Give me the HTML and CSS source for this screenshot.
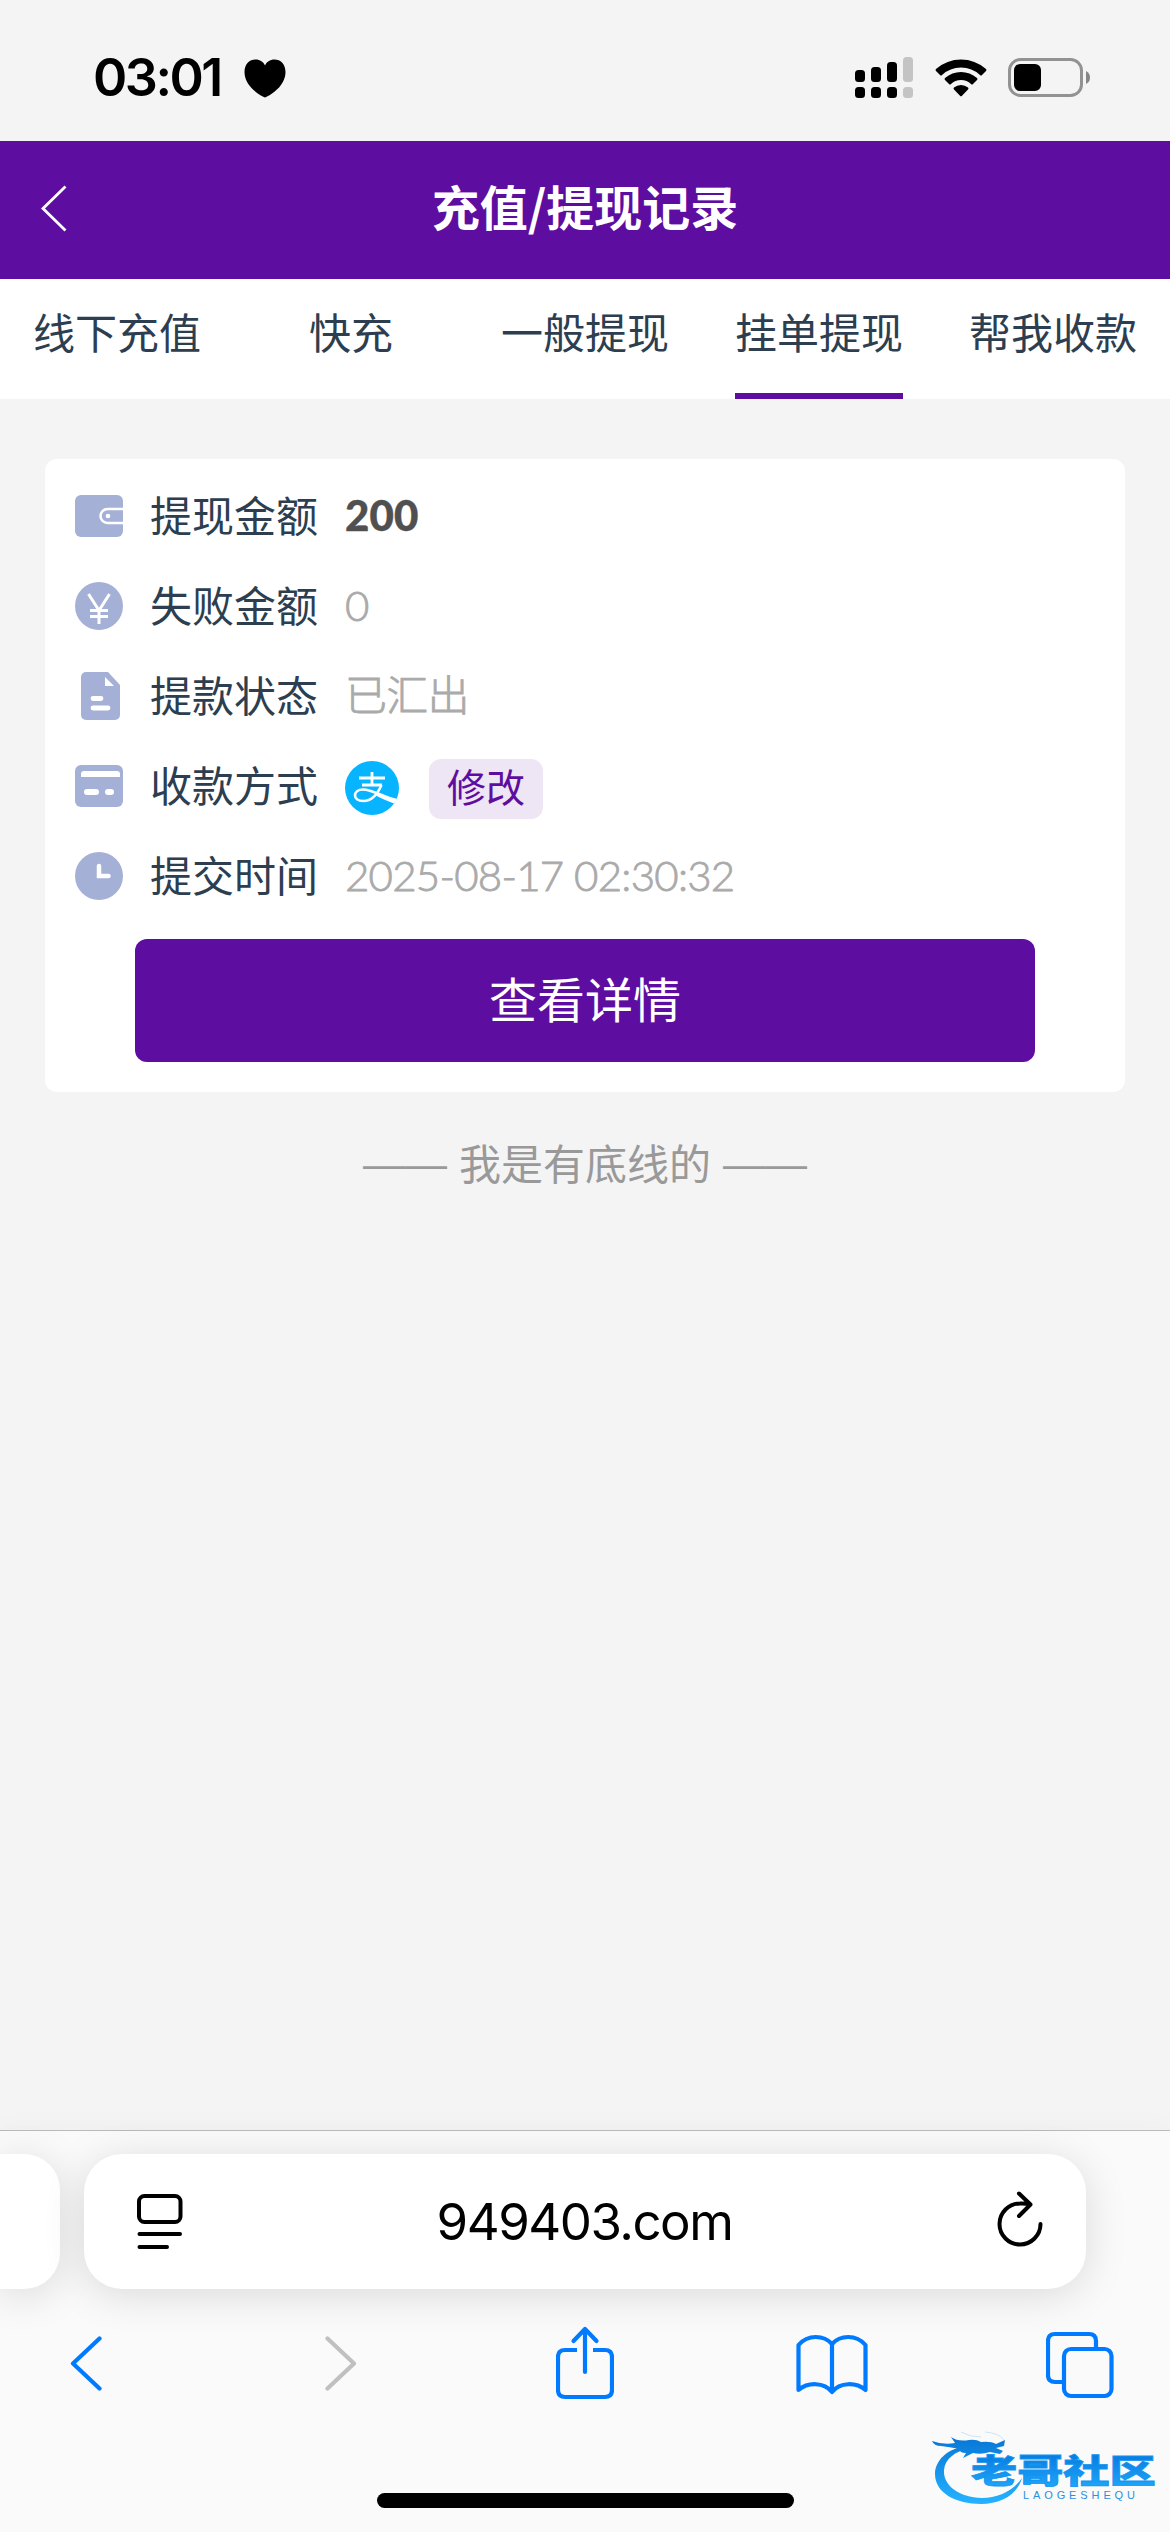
FILE: index.html
```html
<!DOCTYPE html>
<html lang="zh-CN">
<head>
<meta charset="utf-8">
<title>充值/提现记录</title>
<link rel="stylesheet" href="styles.css">
</head>
<body>
<div class="screen">
  <div class="status">
    <span class="time">03:01</span>
    <svg class="heart" width="42" height="39" viewBox="0 0 42 39"><path d="M21 38.5C15 36 .5 27 .5 13C.5 5 5.500 .5 11.500 .5C16 .5 19.500 3 21 6.500C22.500 3 26 .5 30.500 .5C36.500 .5 41.500 5 41.500 13C41.500 27 27 36 21 38.500Z"/></svg>
    <svg class="signal" width="58" height="42" viewBox="0 0 58 42"><rect y="13" width="10" height="12" rx="3.500"/><rect x="16" y="10" width="10" height="15" rx="3.500"/><rect x="32" y="5" width="10" height="20" rx="3.500"/><rect y="30" width="10" height="11" rx="3.500"/><rect x="16" y="30" width="10" height="11" rx="3.500"/><rect x="32" y="30" width="10" height="11" rx="3.500"/><g fill="#c4c4c4"><rect x="48" width="10" height="25" rx="3.500"/><rect x="48" y="30" width="10" height="11" rx="3.500"/></g></svg>
    <svg class="wifi" width="52" height="38" viewBox="0 0 52 38"><path d="M1 12Q0 11 1 10Q12 .5 26 .5T51 10Q52 11 51 12L47 16Q46 17 45 16Q37 8.500 26 8.500T7 16Q6 17 5 16Z"/><path d="M10 21Q9 20 10 19Q17 13 26 13T42 19Q43 20 42 21L38 25Q37 26 36 25Q32 21 26 21T16 25Q15 26 14 25Z"/><path d="M19 30.500Q18 29.500 19 28.500Q22 26 26 26T33 28.500Q34 29.500 33 30.500L27 36.800Q26 37.800 25 36.800Z"/></svg>
    <svg class="battery" width="83" height="39" viewBox="0 0 83 39"><rect x="1.500" y="1.500" width="72" height="36" rx="11" fill="none" stroke="#929292" stroke-width="3"/><rect x="6" y="6" width="27" height="27" rx="6"/><path d="M78 13Q82 15 82 19.500T78 26Z" fill="#868686"/></svg>
  </div>

  <header class="header">
    <svg class="header-back" width="26" height="47" viewBox="0 0 26 47"><path d="M24.500 1.500L2 23.500L24.500 45.500" fill="none" stroke="#fff" stroke-width="2.800"/></svg>
    <h1 class="title">充值/提现记录</h1>
  </header>

  <nav class="tabs">
    <span class="tab">线下充值</span>
    <span class="tab">快充</span>
    <span class="tab">一般提现</span>
    <span class="tab tab-active">挂单提现</span>
    <span class="tab">帮我收款</span>
  </nav>

  <main class="content">
    <section class="card">
      <div class="row">
        <svg class="icon" viewBox="0 0 48 48"><rect y="3" width="48" height="42" rx="6"/><path d="M48 17H32.500a7 7 0 0 0 0 14H48" fill="none" stroke="#fff" stroke-width="2.500"/><circle cx="33" cy="24" r="2.300" fill="#fff"/></svg>
        <span class="label">提现金额</span><span class="value amount">200</span>
      </div>
      <div class="row">
        <svg class="icon" viewBox="0 0 48 48"><circle cx="24" cy="24" r="24"/><path d="M13.500 12L24 28.500L34.500 12M24 28V42M15 28.500H33M15 34.500H33" fill="none" stroke="#fff" stroke-width="3"/></svg>
        <span class="label">失败金额</span><span class="value">0</span>
      </div>
      <div class="row">
        <svg class="icon" viewBox="0 0 48 48"><path d="M11 0H33L45 13V43a5 5 0 0 1-5 5H11a5 5 0 0 1-5-5V5a5 5 0 0 1 5-5Z"/><path d="M30 5L39 14H30Z" fill="#fff"/><path d="M18 26.500H26M18 36H33" stroke="#fff" stroke-width="4.800" stroke-linecap="round"/></svg>
        <span class="label">提款状态</span><span class="value">已汇出</span>
      </div>
      <div class="row">
        <svg class="icon" viewBox="0 0 48 48"><rect y="3" width="48" height="42" rx="6"/><path d="M6 15V12a3 3 0 0 1 3-3H42a3 3 0 0 1 3 3V15Z" fill="#fff"/><path d="M12 30H21M33 30H36" stroke="#fff" stroke-width="6" stroke-linecap="round"/></svg>
        <span class="label">收款方式</span>
        <svg class="alipay" width="54" height="54" viewBox="0 0 54 54"><circle cx="27" cy="27" r="27" fill="#06b4ff"/><path d="M14 17H40M27 11V24M17 24H37" fill="none" stroke="#fff" stroke-width="2.800"/><path d="M36.500 24C33 32 27 40 18.500 40C12.500 40 10 37 10 34.500C10 31 13 28.500 18 28.500C27 28.500 36 35 52 39.500" fill="none" stroke="#fff" stroke-width="2.600"/><path d="M32 32Q43 36.500 52.500 38L49 42.500Q37 38 30 34Z" fill="#fff"/></svg>
        <span class="edit">修改</span>
      </div>
      <div class="row">
        <svg class="icon" viewBox="0 0 48 48"><circle cx="24" cy="24" r="24"/><path d="M24 14V24H33.500" fill="none" stroke="#fff" stroke-width="4.500" stroke-linecap="round"/></svg>
        <span class="label">提交时间</span><span class="value">2025-08-17 02:30:32</span>
      </div>
      <div class="detail">查看详情</div>
    </section>
    <p class="end"><span class="dash">——</span><span>我是有底线的</span><span class="dash">——</span></p>
  </main>

  <footer class="browser">
    <div class="address-row">
      <div class="prev-tab"></div>
      <div class="address">
        <svg width="46" height="56" viewBox="0 0 46 56" fill="none" stroke="#000" stroke-width="4" stroke-linecap="round"><rect x="2" y="2" width="41.500" height="26" rx="5.500"/><path d="M2.500 40H43M2.500 53H30"/></svg>
        <span class="url">949403.com</span>
        <svg class="reload" width="48" height="58" viewBox="0 0 48 58" fill="none" stroke="#000" stroke-width="4" stroke-linecap="round" stroke-linejoin="round"><path d="M44.500 34A20.500 20.500 0 1 1 24 13.500Q29 13.200 34 14.500M23 3.500L34.500 14.500L23 26"/></svg>
      </div>
    </div>
    <div class="toolbar">
      <svg class="tool-back" width="32" height="76" viewBox="0 0 32 76"><path d="M29.500 13.500L3 38.500L29.500 63.500"/></svg>
      <svg class="tool-forward" width="32" height="76" viewBox="0 0 32 76"><path d="M2.500 13.500L29 38.500L2.500 63.500"/></svg>
      <svg class="tool-share" width="58" height="76" viewBox="0 0 58 76"><path d="M21 25H9Q2 25 2 32V65Q2 72 9 72H49Q56 72 56 65V32Q56 25 49 25H37" stroke-linecap="butt"/><path d="M29 47V4M17.500 16L29 4L40.500 16"/></svg>
      <svg class="tool-book" width="72" height="76" viewBox="0 0 72 76"><path d="M36 20V67M36 19C28 10 12 9 2.500 20V65C12 57 28 57 36 67C44 57 60 57 69.500 65V20C60 9 44 10 36 19Z"/></svg>
      <svg class="tool-tabs" width="68" height="76" viewBox="0 0 68 76"><rect x="18" y="24" width="47.500" height="47" rx="7"/><path d="M16 57H9Q2 57 2 50V16Q2 9 9 9H43Q50 9 50 16V23" stroke-linecap="butt"/></svg>
    </div>
    <div class="home"></div>
    <svg class="watermark" width="232" height="80" viewBox="0 0 232 80">
      <defs><linearGradient id="blue" gradientUnits="userSpaceOnUse" x1="0" y1="8" x2="0" y2="72"><stop offset="0" stop-color="#0878d8"/><stop offset="1" stop-color="#25b2ff"/></linearGradient>
      <linearGradient id="letters" x1="0" y1="0" x2="0" y2="1"><stop offset=".2" stop-color="#087bdf"/><stop offset="1" stop-color="#22adff"/></linearGradient></defs>
      <path fill="url(#blue)" d="M36 15C16 17 4 30 4 43C4 62 25 73 50 73C70 73 86 64 91 47C82 60 67 67 51 67C27 66 12 54 13 39C14 28 24 20 38 18Z"/>
      <path fill="url(#blue)" d="M1 10Q12 14 24 12L20 6Q27 11 38 9Q45 8 50 11Q60 10 65 13L74 9L73 15L65 17L72 20L69 23L59 21Q50 24 42 22L32 27L35 22Q28 22 29 18Q18 16 10 15Q3 15 1 10Z"/>
      <path d="M30 1Q39 6 50 6M54 1Q68 2 73 9" fill="none" stroke="#cfe3f4" stroke-width="1"/>
      <text class="wm-name" transform="translate(40 52) scale(1.400 1)" fill="url(#letters)">老哥社区</text>
      <text class="wm-latin" x="92" y="68" textLength="112">LAOGESHEQU</text>
    </svg>
  </footer>
</div>
</body>
</html>
```

FILE: styles.css
```css
* { box-sizing: border-box; }
body {
  margin: 0;
  background: #f4f4f4;
  font-family: Lato, "Noto Sans CJK SC", sans-serif;
}
svg { display: block; flex: none; }
.screen {
  width: 1170px;
  height: 2532px;
  display: flex;
  flex-direction: column;
  overflow: hidden;
}

.status {
  height: 141px;
  flex: none;
  display: flex;
  align-items: flex-start;
  padding: 0 79px 0 93px;
}
.time {
  width: 151px;
  padding-top: 47px;
  font: 600 52px/62px Inter, sans-serif;
  letter-spacing: -2.5px;
  white-space: nowrap;
}
.heart { margin-top: 59px; }
.signal { margin: 57px 0 0 auto; }
.wifi { margin: 59px 0 0 22px; }
.battery { margin: 58px 0 0 21px; }

.header {
  height: 138px;
  flex: none;
  display: grid;
  grid-template-columns: 130px 1fr 130px;
  align-items: center;
  background: #5d0da0;
}
.header-back { margin: 0 0 4px 41px; }
.title {
  margin: 0;
  padding-bottom: 10px;
  font: 700 48px/70px "Noto Sans CJK SC", sans-serif;
  text-align: center;
  color: #fff;
}

.tabs {
  height: 120px;
  flex: none;
  display: grid;
  grid-template-columns: repeat(5, 1fr);
  justify-items: center;
  background: #fff;
}
.tab {
  height: 120px;
  font: 400 42px/104px "Noto Sans CJK SC", sans-serif;
  color: #2c3e50;
}
.tab-active { border-bottom: 6px solid #5d0da0; }

.content { flex: 1; padding: 60px 45px 0; }
.card {
  height: 633px;
  padding: 12px 30px 30px;
  border-radius: 12px;
  background: #fff;
}
.row { height: 90px; display: flex; align-items: center; }
.icon { width: 48px; height: 48px; fill: #a5b0d6; }
.label {
  width: 195px;
  margin-left: 27px;
  padding-bottom: 4px;
  font: 400 42px/60px "Noto Sans CJK SC", sans-serif;
  color: #2c3e50;
}
.value {
  padding-bottom: 2px;
  font-size: 42px;
  line-height: 60px;
  font-weight: 300;
  letter-spacing: -.75px;
  color: #aaa;
  -webkit-text-stroke: .8px #aaa;
}
.amount {
  font-weight: 900;
  letter-spacing: .2px;
  color: #505050;
  -webkit-text-stroke: .4px #505050;
}
.alipay { margin-top: 4px; }
.edit {
  width: 114px;
  height: 60px;
  margin: 6px 0 0 30px;
  border-radius: 12px;
  background: #eee5f5;
  color: #5d0da0;
  font: 400 39px/52px "Noto Sans CJK SC", sans-serif;
  text-align: center;
}
.detail {
  height: 123px;
  margin: 18px 60px 0;
  border-radius: 12px;
  background: #5d0da0;
  color: #fff;
  font: 400 48px/116px "Noto Sans CJK SC", sans-serif;
  text-align: center;
}
.end {
  display: flex;
  justify-content: center;
  gap: 12px;
  margin: 40px 0 0;
  font: 400 42px/60px "Noto Sans CJK SC", sans-serif;
  color: #999;
}
.dash { padding-top: 2px; font-family: "Liberation Sans", sans-serif; }

.browser {
  position: relative;
  height: 402px;
  flex: none;
  border-top: 1px solid #b9bbba;
  background: #fafafa;
  box-shadow: 0 0 30px rgba(0, 0, 0, .03);
}
.address-row { display: flex; gap: 24px; padding-top: 23px; }
.prev-tab, .address {
  height: 135px;
  background: #fff;
  box-shadow: 0 6px 42px rgba(0, 0, 0, .13);
}
.prev-tab { width: 60px; border-radius: 0 36px 36px 0; }
.address {
  width: 1002px;
  display: flex;
  align-items: center;
  justify-content: space-between;
  padding: 0 42px 0 53px;
  border-radius: 38px;
}
.url {
  margin-right: 10px;
  font: 400 51px/62px Inter, sans-serif;
  letter-spacing: -1.5px;
}
.reload { margin-bottom: 5px; }
.toolbar {
  display: flex;
  margin-top: 36px;
  fill: none;
  stroke: #007aff;
  stroke-width: 4.2;
  stroke-linecap: round;
  stroke-linejoin: round;
}
.tool-back { margin-left: 70px; }
.tool-forward { margin-left: 223px; stroke: #c0c0c0; }
.tool-share { margin-left: 199px; }
.tool-book { margin-left: 182px; }
.tool-tabs { margin-left: 178px; }
.home {
  width: 417px;
  height: 15px;
  margin: 92px auto 0;
  border-radius: 8px;
  background: #000;
}
.watermark { position: absolute; left: 931px; top: 300px; }
.wm-name { font: 900 33px "Noto Sans CJK SC", sans-serif; stroke: #1295f0; stroke-width: .8px; }
.wm-latin { font: 400 11px "Liberation Sans", sans-serif; fill: #2a8fe0; }
```
